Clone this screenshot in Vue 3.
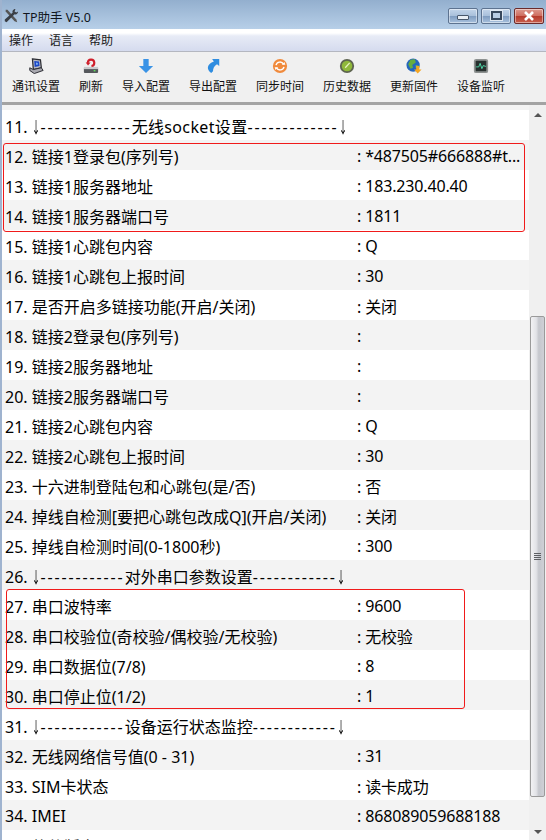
<template>
  <div class="window">
    <div class="titlebar">
      <svg class="app-icon" width="16" height="16" viewBox="0 0 18 18">
        <path d="M3 2 L5 2 L15 13 L16 16 L13 15 L3 4 Z" fill="#555" />
        <path d="M14 1 C11 1 10 4 11 5 L2 13 L2 15 L4 16 L13 7 C15 8 17 6 17 4 L15 5 L13 4 Z" fill="#3a3f46" />
      </svg>
      <span class="title">TP助手 V5.0</span>
      <div class="win-btns">
        <div class="win-btn"><i class="glyph-min"></i></div>
        <div class="win-btn"><i class="glyph-max"></i></div>
        <div class="win-btn close">
          <svg width="12" height="10" viewBox="0 0 12 10">
            <path d="M2 1 L10 9 M10 1 L2 9" stroke="#fff" stroke-width="2.6" />
          </svg>
        </div>
      </div>
    </div>

    <div class="menubar">
      <span v-for="m in menus" :key="m">{{ m }}</span>
    </div>

    <div class="toolbar">
      <div class="tool">
        <svg viewBox="0 0 18 18">
          <path d="M5 1 L14 2 L15 11 L6 13 Z" fill="#b9bbc4" stroke="#2b2c33" stroke-width="1.4" />
          <path d="M7 3.5 L12.5 4 L13 9 L7.5 10 Z" fill="#1c48c8" />
          <path d="M9 5 L11 5.5 L11 7.5 L9 7.5 Z" fill="#7fb2f0" />
          <path d="M2 11 L6 13 L15 11 L17 14 L7 17.5 L2 14 Z" fill="#a9a9b0" stroke="#2b2c33" stroke-width="1.1" />
        </svg>
        <span>通讯设置</span>
      </div>
      <div class="tool">
        <svg viewBox="0 0 18 18">
          <rect x="1" y="11" width="16" height="6" rx="1.2" fill="#55585c" />
          <rect x="1" y="10" width="16" height="2.5" fill="#c8cacc" />
          <rect x="12" y="13.5" width="2" height="1.6" fill="#5fdc5a" />
          <path d="M5.5 5.5 A3.6 3.6 0 1 1 9.5 9" fill="none" stroke="#cf1f2b" stroke-width="2.4" />
          <path d="M3 5 L8.5 5 L5.7 8.5 Z" fill="#cf1f2b" />
        </svg>
        <span>刷新</span>
      </div>
      <div class="tool">
        <svg viewBox="0 0 18 18">
          <path d="M6 1 L12 1 L12 9 L17 9 L9 17 L1 9 L6 9 Z" fill="#3a93e6" />
        </svg>
        <span>导入配置</span>
      </div>
      <div class="tool">
        <svg viewBox="0 0 18 18">
          <path d="M8 1 L16 1 L16 9 L13.5 7 C10 9 9 12 9 15 L7 17 C3 14 2 10 5 7 C6.5 5.5 8.5 4.5 10 4 Z" fill="#2f8de0" />
        </svg>
        <span>导出配置</span>
      </div>
      <div class="tool">
        <svg viewBox="0 0 18 18">
          <circle cx="9" cy="9" r="8" fill="#f08a3c" />
          <path d="M4.5 8 A4.6 4.6 0 0 1 13 7 M13.5 10 A4.6 4.6 0 0 1 5 11" fill="none" stroke="#fff" stroke-width="1.6" />
          <path d="M11 7.5 L15 7.5 L14 4.5 Z M7 10.5 L3 10.5 L4 13.5 Z" fill="#fff" />
        </svg>
        <span>同步时间</span>
      </div>
      <div class="tool">
        <svg viewBox="0 0 18 18">
          <circle cx="9" cy="9" r="8" fill="#5d6350" />
          <circle cx="9" cy="9" r="6" fill="#8fb83a" />
          <path d="M7 11 L12 5.5" stroke="#e9f3c0" stroke-width="1.4" />
        </svg>
        <span>历史数据</span>
      </div>
      <div class="tool">
        <svg viewBox="0 0 18 18">
          <circle cx="8" cy="8" r="7.5" fill="#2566bd" />
          <path d="M5 2 L10 1.5 L11 5 L7 8 L8 11 L5 12 L2.5 7 Z" fill="#66ad3f" />
          <path d="M11 8 L15 9 L14 12 L11 11 Z" fill="#7cc04f" />
          <path d="M11.5 9 L15 9 L15 13 L17.5 13 L13.2 17.5 L9 13 L11.5 13 Z" fill="#f5a623" />
        </svg>
        <span>更新固件</span>
      </div>
      <div class="tool">
        <svg viewBox="0 0 18 18">
          <rect x="1" y="1" width="16" height="16" rx="2.5" fill="#8d9190" />
          <rect x="3" y="3" width="12" height="12" rx="1" fill="#27302e" />
          <path d="M3.5 10 L6.5 10 L8 6 L10 12 L11.5 8.5 L14.5 9.5" fill="none" stroke="#4fd6a8" stroke-width="1.1" />
        </svg>
        <span>设备监听</span>
      </div>
    </div>

    <div class="content">
      <div class="list">
        <div class="stub"></div>
        <div v-for="r in rows" :key="r.n" class="row">
          <template v-if="r.section">
            <span class="label">{{ r.n }}. <span class="arr">↓</span><span class="dash">{{ '-'.repeat(r.dashes) }}</span><span :class="{ wide: r.wide }">{{ r.section }}</span><span class="dash">{{ '-'.repeat(r.dashes) }}</span><span class="arr">↓</span></span>
          </template>
          <template v-else>
            <span class="label">{{ r.n }}. {{ r.label }}</span>
            <span v-if="r.value !== undefined" class="value">: {{ r.value }}</span>
          </template>
        </div>
        <div class="mark mark-link"></div>
        <div class="mark mark-serial"></div>
      </div>
      <div class="scrollbar">
        <div class="arrow-btn"><i class="arrow-up"></i></div>
        <div class="thumb">
          <div class="grip"><i></i><i></i><i></i><i></i></div>
        </div>
        <div class="arrow-btn bottom"><i class="arrow-down"></i></div>
      </div>
    </div>
  </div>
</template>

<script setup>
const menus = ['操作', '语言', '帮助']

const rows = [
  { n: 11, section: '无线socket设置', dashes: 13, wide: true },
  { n: 12, label: '链接1登录包(序列号)', value: '*487505#666888#t...' },
  { n: 13, label: '链接1服务器地址', value: '183.230.40.40' },
  { n: 14, label: '链接1服务器端口号', value: '1811' },
  { n: 15, label: '链接1心跳包内容', value: 'Q' },
  { n: 16, label: '链接1心跳包上报时间', value: '30' },
  { n: 17, label: '是否开启多链接功能(开启/关闭)', value: '关闭' },
  { n: 18, label: '链接2登录包(序列号)', value: '' },
  { n: 19, label: '链接2服务器地址', value: '' },
  { n: 20, label: '链接2服务器端口号', value: '' },
  { n: 21, label: '链接2心跳包内容', value: 'Q' },
  { n: 22, label: '链接2心跳包上报时间', value: '30' },
  { n: 23, label: '十六进制登陆包和心跳包(是/否)', value: '否' },
  { n: 24, label: '掉线自检测[要把心跳包改成Q](开启/关闭)', value: '关闭' },
  { n: 25, label: '掉线自检测时间(0-1800秒)', value: '300' },
  { n: 26, section: '对外串口参数设置', dashes: 12 },
  { n: 27, label: '串口波特率', value: '9600' },
  { n: 28, label: '串口校验位(奇校验/偶校验/无校验)', value: '无校验' },
  { n: 29, label: '串口数据位(7/8)', value: '8' },
  { n: 30, label: '串口停止位(1/2)', value: '1' },
  { n: 31, section: '设备运行状态监控', dashes: 12 },
  { n: 32, label: '无线网络信号值(0 - 31)', value: '31' },
  { n: 33, label: 'SIM卡状态', value: '读卡成功' },
  { n: 34, label: 'IMEI', value: '868089059688188' },
  { n: 35, label: '软件版本' }
]
</script>

<style>
html,
body {
  margin: 0;
  overflow: hidden;
}
</style>

<style scoped>
.window {
  width: 546px;
  height: 840px;
  overflow: hidden;
  display: flex;
  flex-direction: column;
  box-sizing: border-box;
  border-left: 2px solid #9fb3cf;
  background: #f0f0f0;
  font-family: "Noto Sans", "Noto Sans CJK SC", sans-serif;
  color: #000;
}

.titlebar {
  height: 29px;
  margin-left: -2px;
  flex: none;
  display: flex;
  align-items: center;
  padding: 0 2px 0 3px;
  background: linear-gradient(#93afce, #b7cfe8);
}

.app-icon {
  flex: none;
  margin-top: 3px;
}

.title {
  margin: 4px 0 0 4px;
  font-size: 12.5px;
  color: #10151c;
}

.win-btns {
  margin: 0 0 0 auto;
  display: flex;
  gap: 3px;
  padding-top: 2px;
}

.win-btn {
  width: 30px;
  height: 16px;
  box-sizing: border-box;
  border: 1px solid #5d7390;
  border-radius: 2px;
  display: flex;
  align-items: center;
  justify-content: center;
  background: linear-gradient(#c3d5ea 0%, #a9c0db 48%, #7f9cc0 52%, #a9c2de 100%);
  box-shadow: inset 0 0 0 1px rgba(255, 255, 255, 0.45);
}

.win-btn.close {
  border-color: #6b2b2b;
  background: linear-gradient(#dc9a90 0%, #cf6e60 48%, #b53a2c 52%, #c8604f 100%);
}

.glyph-min {
  width: 10px;
  height: 3px;
  margin-top: 4px;
  background: #e8eef5;
  border: 1px solid #48576b;
  border-radius: 1px;
}

.glyph-max {
  width: 7px;
  height: 5px;
  border: 2px solid #38485c;
  outline: 1px solid #dfe8f2;
  background: #b9cde3;
}

.menubar {
  height: 22px;
  flex: none;
  box-sizing: border-box;
  display: flex;
  align-items: flex-end;
  gap: 16px;
  padding: 0 0 1px 7px;
  font-size: 12px;
  line-height: 18px;
  color: #1a1a20;
  background: linear-gradient(#fff 0, #fff 4px, #e7ebf6 7px, #d5dbee 100%);
}

.toolbar {
  height: 54px;
  flex: none;
  box-sizing: border-box;
  display: flex;
  gap: 19px;
  padding: 6px 0 0 10px;
  border-top: 1px solid #b4b7c0;
  border-bottom: 3px solid #a3a3a3;
  background: #f0f0f0;
}

.tool {
  display: flex;
  flex-direction: column;
  align-items: center;
  gap: 5px;
  font-size: 12px;
  line-height: 16px;
  color: #111;
}

.tool svg {
  display: block;
  width: 16px;
  height: 16px;
}

.content {
  flex: 1;
  min-height: 0;
  display: flex;
}

.list {
  position: relative;
  flex: 1;
  min-width: 0;
  overflow: hidden;
  background: #fff;
}

.stub {
  height: 5px;
  background: #f3f3f3;
}

.row {
  height: 30px;
  box-sizing: border-box;
  padding: 1px 0 0 3px;
  display: flex;
  align-items: center;
  font-size: 16px;
  white-space: nowrap;
  background: #fff;
}

.row:nth-child(odd) {
  background: #f3f3f3;
}

.label {
  width: 352px;
  flex: none;
}

.value {
  letter-spacing: -0.15px;
}

.arr {
  display: inline-block;
  margin: 0 -3.6px;
  transform: scaleX(0.55);
  will-change: transform;
}

.dash {
  letter-spacing: 1.85px;
}

.wide {
  letter-spacing: 0.35px;
}

.mark {
  position: absolute;
  box-sizing: border-box;
  border: 1px solid #f01a1a;
  border-radius: 3px;
  pointer-events: none;
}

.mark-link {
  left: 1px;
  top: 38px;
  width: 522px;
  height: 89px;
}

.mark-serial {
  left: 4px;
  top: 484px;
  width: 459px;
  height: 120px;
}

.scrollbar {
  width: 17px;
  flex: none;
  display: flex;
  flex-direction: column;
  background: #f0f0f0;
}

.arrow-btn {
  height: 17px;
  margin-bottom: 193px;
  display: flex;
  align-items: center;
  justify-content: center;
  padding-top: 1px;
}

.arrow-btn.bottom {
  margin: auto 0 0;
  padding-top: 14px;
}

.arrow-up {
  border: 4px solid transparent;
  border-top: 0;
  border-bottom: 4px solid #555;
}

.arrow-down {
  border: 4px solid transparent;
  border-bottom: 0;
  border-top: 4px solid #555;
}

.thumb {
  height: 481px;
  width: 15px;
  margin-left: 1px;
  flex: none;
  box-sizing: border-box;
  display: flex;
  align-items: center;
  justify-content: center;
  border: 1px solid #9a9a9a;
  border-radius: 2px;
  background: linear-gradient(90deg, #f2f2f4 0%, #e2e3e7 40%, #c5c7cd 60%, #cfd0d6 100%);
}

.grip {
  display: flex;
  flex-direction: column;
  gap: 1px;
}

.grip i {
  display: block;
  width: 7px;
  height: 1px;
  background: #5e6064;
}
</style>
